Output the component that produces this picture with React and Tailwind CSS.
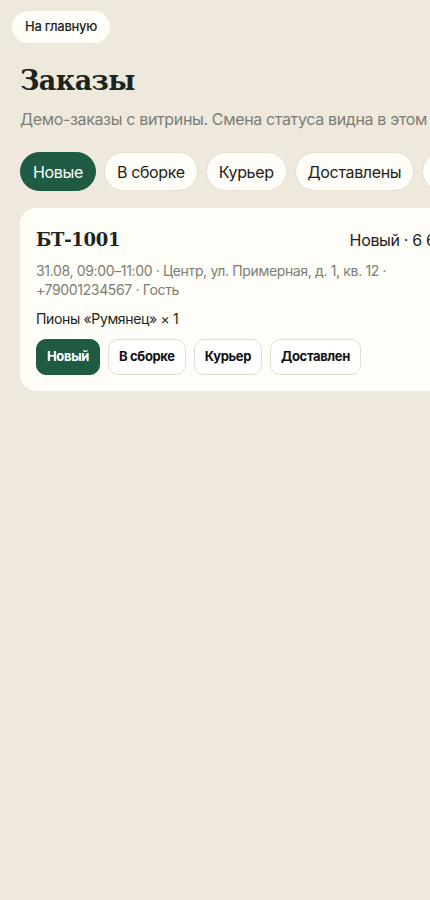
import React, { useState } from 'react';

const tabs = ['Новые', 'В сборке', 'Курьер', 'Доставлены', 'Все'];
const statuses = ['Новый', 'В сборке', 'Курьер', 'Доставлен'];

export default function App() {
  const [tab, setTab] = useState('Новые');
  const [status, setStatus] = useState('Новый');

  return (
    <div className="min-h-screen w-full overflow-hidden bg-[#efe8dd] text-[#1c2420] font-['Inter','Noto_Sans',sans-serif] tracking-[-0.35px]">
      <div className="w-[640px] pl-5 pt-[11px]">
        <button className="-ml-2 h-8 px-[13px] rounded-full bg-[#fffdf7] text-[13px] font-medium text-[#1c2420] tracking-[-0.3px]">
          На главную
        </button>

        <h1 className="mt-[18px] font-['DejaVu_Serif',serif] font-bold text-[27px] leading-[40px] tracking-[-0.6px]">
          Заказы
        </h1>
        <p className="mt-[6px] text-[16px] leading-6 text-[#7b7e76] whitespace-nowrap">
          Демо-заказы с витрины. Смена статуса видна в этом окне.
        </p>

        <div className="mt-[21px] flex gap-2">
          {tabs.map((t) => (
            <button
              key={t}
              onClick={() => setTab(t)}
              className={
                t === tab
                  ? 'h-[39px] px-3 rounded-full bg-[#1f5a43] text-white text-[16px] border border-[#1f5a43]'
                  : 'h-[39px] px-3 rounded-full bg-[#fffdf7] text-[#1c2420] text-[16px] border border-[#e6dfd2]'
              }
            >
              {t}
            </button>
          ))}
        </div>

        <div className="mt-[17px] w-[466px] rounded-2xl bg-[#fffdf8] px-4 pt-[18px] pb-4">
          <div className="flex items-center justify-between">
            <div className="font-['DejaVu_Serif',serif] font-bold text-[18px] leading-7 tracking-[-0.3px]">БТ-1001</div>
            <div className="text-[16px] text-[#1c2420] whitespace-nowrap">Новый · 6 600 ₽</div>
          </div>
          <div className="mt-[7px] max-w-[360px] text-[14px] leading-[19px] text-[#7b7e76]">
            31.08, 09:00–11:00 · Центр, ул. Примерная, д. 1, кв. 12 · +79001234567 · Гость
          </div>
          <div className="mt-[10px] text-[14px] leading-5">Пионы «Румянец» × 1</div>
          <div className="mt-[10px] flex gap-2">
            {statuses.map((s) => (
              <button
                key={s}
                onClick={() => setStatus(s)}
                className={
                  s === status
                    ? 'h-9 px-[10px] rounded-[10px] bg-[#1f5a43] text-white text-[13px] font-bold border border-[#1f5a43]'
                    : 'h-9 px-[10px] rounded-[10px] bg-white text-[#111] text-[13px] font-bold border border-[#e3ddd2]'
                }
              >
                {s}
              </button>
            ))}
          </div>
        </div>
      </div>
    </div>
  );
}
